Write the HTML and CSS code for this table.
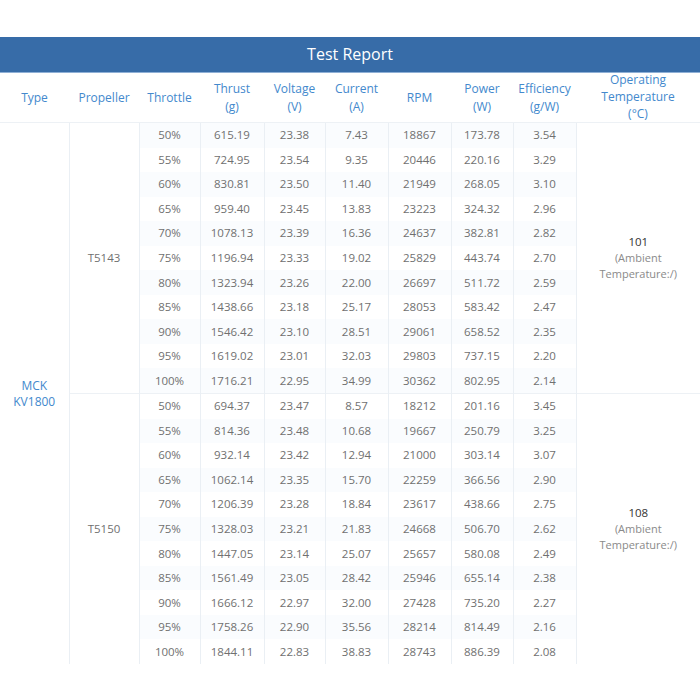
FILE: index.html
```html
<!DOCTYPE html>
<html>
<head>
<meta charset="utf-8">
<link rel="stylesheet" href="styles.css">
</head>
<body>
<div class="page">
  <div class="title">Test Report</div>
  <table class="report">
    <colgroup>
      <col style="width:69px"><col style="width:70px"><col style="width:61px"><col style="width:64px"><col style="width:61px"><col style="width:63px"><col style="width:63px"><col style="width:62px"><col style="width:63px"><col style="width:124px">
    </colgroup>
    <thead>
      <tr>
        <th class="first">Type</th>
        <th>Propeller</th>
        <th>Throttle</th>
        <th>Thrust<br>(g)</th>
        <th>Voltage<br>(V)</th>
        <th>Current<br>(A)</th>
        <th>RPM</th>
        <th>Power<br>(W)</th>
        <th>Efficiency<br>(g/W)</th>
        <th><div class="op">Operating<br>Temperature<br>(°C)</div></th>
      </tr>
    </thead>
    <tbody>
      <tr class="odd"><td class="type first" rowspan="22">MCK<br>KV1800</td><td class="prop" rowspan="11">T5143</td><td class="n">50%</td><td class="n">615.19</td><td class="n">23.38</td><td class="n">7.43</td><td class="n">18867</td><td class="n">173.78</td><td class="n">3.54</td><td class="temp" rowspan="11"><span class="tv">101</span><br>(Ambient<br>Temperature:/)</td></tr>
      <tr><td class="n">55%</td><td class="n">724.95</td><td class="n">23.54</td><td class="n">9.35</td><td class="n">20446</td><td class="n">220.16</td><td class="n">3.29</td></tr>
      <tr class="odd"><td class="n">60%</td><td class="n">830.81</td><td class="n">23.50</td><td class="n">11.40</td><td class="n">21949</td><td class="n">268.05</td><td class="n">3.10</td></tr>
      <tr><td class="n">65%</td><td class="n">959.40</td><td class="n">23.45</td><td class="n">13.83</td><td class="n">23223</td><td class="n">324.32</td><td class="n">2.96</td></tr>
      <tr class="odd"><td class="n">70%</td><td class="n">1078.13</td><td class="n">23.39</td><td class="n">16.36</td><td class="n">24637</td><td class="n">382.81</td><td class="n">2.82</td></tr>
      <tr><td class="n">75%</td><td class="n">1196.94</td><td class="n">23.33</td><td class="n">19.02</td><td class="n">25829</td><td class="n">443.74</td><td class="n">2.70</td></tr>
      <tr class="odd"><td class="n">80%</td><td class="n">1323.94</td><td class="n">23.26</td><td class="n">22.00</td><td class="n">26697</td><td class="n">511.72</td><td class="n">2.59</td></tr>
      <tr><td class="n">85%</td><td class="n">1438.66</td><td class="n">23.18</td><td class="n">25.17</td><td class="n">28053</td><td class="n">583.42</td><td class="n">2.47</td></tr>
      <tr class="odd"><td class="n">90%</td><td class="n">1546.42</td><td class="n">23.10</td><td class="n">28.51</td><td class="n">29061</td><td class="n">658.52</td><td class="n">2.35</td></tr>
      <tr><td class="n">95%</td><td class="n">1619.02</td><td class="n">23.01</td><td class="n">32.03</td><td class="n">29803</td><td class="n">737.15</td><td class="n">2.20</td></tr>
      <tr class="odd"><td class="n">100%</td><td class="n">1716.21</td><td class="n">22.95</td><td class="n">34.99</td><td class="n">30362</td><td class="n">802.95</td><td class="n">2.14</td></tr>
      <tr class="group"><td class="prop" rowspan="11">T5150</td><td class="n">50%</td><td class="n">694.37</td><td class="n">23.47</td><td class="n">8.57</td><td class="n">18212</td><td class="n">201.16</td><td class="n">3.45</td><td class="temp" rowspan="11"><span class="tv">108</span><br>(Ambient<br>Temperature:/)</td></tr>
      <tr class="odd"><td class="n">55%</td><td class="n">814.36</td><td class="n">23.48</td><td class="n">10.68</td><td class="n">19667</td><td class="n">250.79</td><td class="n">3.25</td></tr>
      <tr><td class="n">60%</td><td class="n">932.14</td><td class="n">23.42</td><td class="n">12.94</td><td class="n">21000</td><td class="n">303.14</td><td class="n">3.07</td></tr>
      <tr class="odd"><td class="n">65%</td><td class="n">1062.14</td><td class="n">23.35</td><td class="n">15.70</td><td class="n">22259</td><td class="n">366.56</td><td class="n">2.90</td></tr>
      <tr><td class="n">70%</td><td class="n">1206.39</td><td class="n">23.28</td><td class="n">18.84</td><td class="n">23617</td><td class="n">438.66</td><td class="n">2.75</td></tr>
      <tr class="odd"><td class="n">75%</td><td class="n">1328.03</td><td class="n">23.21</td><td class="n">21.83</td><td class="n">24668</td><td class="n">506.70</td><td class="n">2.62</td></tr>
      <tr><td class="n">80%</td><td class="n">1447.05</td><td class="n">23.14</td><td class="n">25.07</td><td class="n">25657</td><td class="n">580.08</td><td class="n">2.49</td></tr>
      <tr class="odd"><td class="n">85%</td><td class="n">1561.49</td><td class="n">23.05</td><td class="n">28.42</td><td class="n">25946</td><td class="n">655.14</td><td class="n">2.38</td></tr>
      <tr><td class="n">90%</td><td class="n">1666.12</td><td class="n">22.97</td><td class="n">32.00</td><td class="n">27428</td><td class="n">735.20</td><td class="n">2.27</td></tr>
      <tr class="odd"><td class="n">95%</td><td class="n">1758.26</td><td class="n">22.90</td><td class="n">35.56</td><td class="n">28214</td><td class="n">814.49</td><td class="n">2.16</td></tr>
      <tr><td class="n">100%</td><td class="n">1844.11</td><td class="n">22.83</td><td class="n">38.83</td><td class="n">28743</td><td class="n">886.39</td><td class="n">2.08</td></tr>
    </tbody>
  </table>
</div>
</body>
</html>
```

FILE: styles.css
```css
html, body {
  margin: 0;
  padding: 0;
  background: #ffffff;
}

.page {
  padding-top: 37px;
  font-family: "Open Sans", "Liberation Sans", sans-serif;
}

.title {
  height: 35px;
  line-height: 34px;
  background: #376ca8;
  border-bottom: 1px solid #8fb0d6;
  color: #ffffff;
  font-size: 16px;
  text-align: center;
}

.report {
  width: 700px;
  table-layout: fixed;
  border-collapse: collapse;
  border-spacing: 0;
}

.report th {
  height: 49px;
  padding: 0 2px;
  font-weight: normal;
  font-size: 12px;
  line-height: 18px;
  color: #4389cd;
  text-align: center;
  vertical-align: middle;
  border-bottom: 1px solid #edf1f5;
}

.report th .op {
  line-height: 17px;
  margin-top: -2px;
}

.report td {
  padding: 0;
  height: 24.55px;
  font-size: 11.5px;
  line-height: 16px;
  color: #707070;
  text-align: center;
  vertical-align: middle;
  border-left: 1px solid #eaeff4;
}

.report td.first {
  border-left: none;
}

.report td.type {
  color: #4389cd;
  font-size: 12px;
  line-height: 16px;
}

.report td.prop {
  font-size: 11.5px;
}

.report td.temp {
  font-size: 11px;
  line-height: 16px;
  color: #8a8a8a;
}

.report td.temp .tv {
  color: #333333;
  font-size: 11.5px;
}

.report tr.odd td.n {
  background: #fafcfe;
}

.report tr.group td {
  border-top: 1px solid #edf1f5;
}
```
